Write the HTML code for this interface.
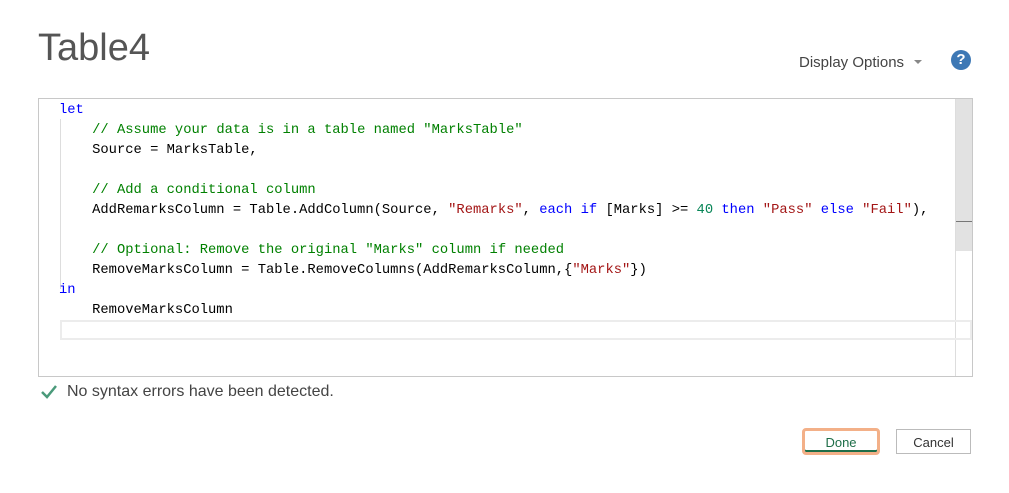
<!DOCTYPE html>
<html><head><style>
body{margin:0;width:1009px;height:493px;background:#fff;font-family:"Liberation Sans",sans-serif;position:relative;overflow:hidden}
.t{position:absolute;left:38px;top:27px;font-size:38px;color:#555;font-weight:300}
.do{position:absolute;left:799px;top:54px;font-size:15px;color:#444}
.caret{position:absolute;left:914px;top:60px;width:0;height:0;border-left:4px solid transparent;border-right:4px solid transparent;border-top:4px solid #888}
.help{position:absolute;left:951px;top:50px;width:20px;height:20px;border-radius:50%;background:#3d78b5;color:#fff;font-weight:bold;font-size:15px;text-align:center;line-height:20px}
.ed{position:absolute;left:38px;top:98px;width:933px;height:277px;border:1px solid #c8c8c8}
.sb{position:absolute;left:955px;top:99px;width:1px;height:277px;background:#ddd}
.sbt{position:absolute;left:956px;top:99px;width:16px;height:152px;background:#e2e2e2}
.sbl{position:absolute;left:956px;top:221px;width:16px;height:1px;background:#777}
.guide{position:absolute;left:60px;top:119px;width:1px;height:170px;background:#ddd}
.cur{position:absolute;left:60px;top:320px;width:908px;height:16px;border:2px solid #ececec}
pre{position:absolute;left:59px;top:101px;margin:0;font-family:"Liberation Mono",monospace;font-size:13.8px;line-height:20px;color:#000}
.k{color:#00f}.c{color:#008000}.s{color:#a31515}.n{color:#098658}
.ok{position:absolute;left:67px;top:383px;font-size:16px;color:#444}
.btn{position:absolute;top:429px;height:25px;font-size:13px;text-align:center;line-height:25px;box-sizing:border-box}
</style></head><body>
<div class="t">Table4</div>
<div class="do">Display Options</div><div class="caret"></div>
<div class="help">?</div>
<div class="ed"></div>
<div class="sb"></div><div class="sbt"></div><div class="sbl"></div>
<div class="guide"></div><div class="cur"></div>
<pre><span class="k">let</span>
    <span class="c">// Assume your data is in a table named "MarksTable"</span>
    Source = MarksTable,

    <span class="c">// Add a conditional column</span>
    AddRemarksColumn = Table.AddColumn(Source, <span class="s">"Remarks"</span>, <span class="k">each</span> <span class="k">if</span> [Marks] &gt;= <span class="n">40</span> <span class="k">then</span> <span class="s">"Pass"</span> <span class="k">else</span> <span class="s">"Fail"</span>),

    <span class="c">// Optional: Remove the original "Marks" column if needed</span>
    RemoveMarksColumn = Table.RemoveColumns(AddRemarksColumn,{<span class="s">"Marks"</span>})
<span class="k">in</span>
    RemoveMarksColumn</pre>
<svg style="position:absolute;left:40px;top:384px" width="18" height="16"><path d="M2 8 L7 13 L16 2" stroke="#4a9a7a" stroke-width="2.5" fill="none"/></svg>
<div class="ok">No syntax errors have been detected.</div>
<div class="btn" style="left:802px;width:78px;border:3px solid #f3b088;border-radius:4px;color:#1e6e48;box-shadow:inset 0 -2px 0 #1e6e48;line-height:23px;height:27px;top:428px">Done</div>
<div class="btn" style="left:896px;width:75px;border:1px solid #bbb;color:#333">Cancel</div>
</body></html>
